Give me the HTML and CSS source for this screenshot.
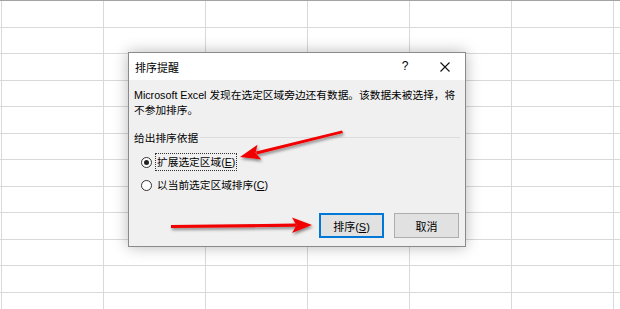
FILE: index.html
```html
<!DOCTYPE html>
<html lang="zh-CN">
<head>
    <meta charset="UTF-8">
    <meta name="viewport" content="width=device-width, initial-scale=1.0">
    <title>排序提醒</title>
    <link rel="stylesheet" href="styles.css">
</head>
<body>

    <div class="sheet">

        <div class="dialog">
            <div class="titlebar">
                <span class="title">排序提醒</span>
                <span class="tb-btn help">?</span>
                <span class="tb-btn close">
                    <svg width="10" height="10" viewBox="0 0 10 10">
                        <path d="M0.5 0.5 L9.5 9.5 M9.5 0.5 L0.5 9.5" stroke="#111" stroke-width="1.1" fill="none"/>
                    </svg>
                </span>
            </div>

            <div class="content">
                <p class="message">Microsoft Excel 发现在选定区域旁边还有数据。该数据未被选择，将<br>不参加排序。</p>

                <div class="group-head">
                    <span>给出排序依据</span>
                    <span class="rule"></span>
                </div>

                <div class="options">
                    <label class="option">
                        <span class="radio checked"></span>
                        <span class="option-text focus">扩展选定区域(<u>E</u>)</span>
                    </label>
                    <label class="option">
                        <span class="radio"></span>
                        <span class="option-text">以当前选定区域排序(<u>C</u>)</span>
                    </label>
                </div>

                <div class="buttons">
                    <button class="btn default">排序(<u>S</u>)</button>
                    <button class="btn">取消</button>
                </div>
            </div>
        </div>

        <!-- 标注箭头 -->
        <svg class="arrows" width="620" height="309" viewBox="0 0 620 309">
            <defs>
                <filter id="shadow" x="-20%" y="-50%" width="140%" height="200%">
                    <feDropShadow dx="1" dy="2" stdDeviation="1.6" flood-color="#000" flood-opacity="0.45"/>
                </filter>
            </defs>
            <g filter="url(#shadow)" fill="#f20000" stroke="none">
                <path d="M342 130.5 L256 151.6 L256.8 154.6 L343 133 Z"/>
                <polygon points="240,157 257.5,144.8 255.5,153 261.3,159.4"/>
                <path d="M171 225 L296 223.6 L296 226.8 L171 228 Z"/>
                <polygon points="312,225 292,217.5 296.5,225.2 292,233"/>
            </g>
        </svg>

    </div>

</body>
</html>
```

FILE: styles.css
```css
body {
    margin: 0;
    font-family: "Liberation Sans", "Noto Sans CJK SC", sans-serif;
    font-size: 10.7px;
    color: #000;
}
.sheet {
    position: relative;
    width: 620px;
    height: 309px;
    overflow: hidden;
    background-color: #fff;
    background-image:
        linear-gradient(#a3a3a3, #a3a3a3),
        repeating-linear-gradient(90deg, transparent 0 1.5px, #d9d9d9 1.5px 2.5px, transparent 2.5px 101.9px),
        repeating-linear-gradient(180deg, transparent 0 0.2px, #d9d9d9 0.2px 1.2px, transparent 1.2px 26.5px);
    background-size: 100% 1px, auto, auto;
    background-repeat: no-repeat, repeat, repeat;
}
.dialog {
    position: absolute;
    left: 128px;
    top: 52px;
    width: 338px;
    box-sizing: border-box;
    border: 1px solid #8a8a8a;
    box-shadow: 0 0 14px rgba(0, 0, 0, 0.28);
    display: flex;
    flex-direction: column;
}
.titlebar {
    height: 27px;
    background: #fff;
    display: flex;
    align-items: center;
    padding-left: 6px;
}
.title {
    flex: 1;
    font-size: 11px;
}
.tb-btn {
    width: 40px;
    height: 27px;
    display: flex;
    align-items: center;
    justify-content: center;
}
.help {
    font-size: 12px;
    padding-bottom: 2px;
    box-sizing: border-box;
}
.close svg {
    display: block;
}
.content {
    background: #f0f0f0;
    padding: 8px 5px 8px 5px;
}
.message {
    margin: 0;
    line-height: 15px;
    white-space: nowrap;
}
.group-head {
    margin-top: 13px;
    height: 15px;
    line-height: 15px;
    display: flex;
    align-items: center;
}
.group-head .rule {
    flex: 1;
    height: 1px;
    background: #dcdcdc;
    margin-left: 2px;
    margin-bottom: 3px;
}
.options {
    margin-top: 7px;
    padding-left: 7px;
    display: flex;
    flex-direction: column;
    gap: 5px;
}
.option {
    height: 18px;
    display: flex;
    align-items: center;
}
.radio {
    width: 11px;
    height: 11px;
    box-sizing: border-box;
    border: 1px solid #333;
    border-radius: 50%;
    background: #fff;
    position: relative;
}
.radio.checked::after {
    content: "";
    position: absolute;
    left: 2px;
    top: 2px;
    width: 5px;
    height: 5px;
    border-radius: 50%;
    background: #222;
}
.option-text {
    margin-left: 3px;
    padding: 0 1px;
    height: 18px;
    line-height: 17px;
    box-sizing: border-box;
    border: 1px solid transparent;
    white-space: nowrap;
}
.option-text.focus {
    border: 1px dotted #333;
}
.buttons {
    margin-top: 19px;
    display: flex;
    justify-content: flex-end;
    gap: 10px;
    padding-right: 1px;
}
.btn {
    width: 65px;
    height: 25px;
    box-sizing: border-box;
    font-family: inherit;
    font-size: 11px;
    color: #000;
    background: #e1e1e1;
    border: 1px solid #adadad;
    padding: 0;
}
.btn.default {
    border: 1px solid #0078d7;
    box-shadow: inset 0 0 0 1px #0078d7;
}
.arrows {
    position: absolute;
    left: 0;
    top: 0;
    pointer-events: none;
}
```
